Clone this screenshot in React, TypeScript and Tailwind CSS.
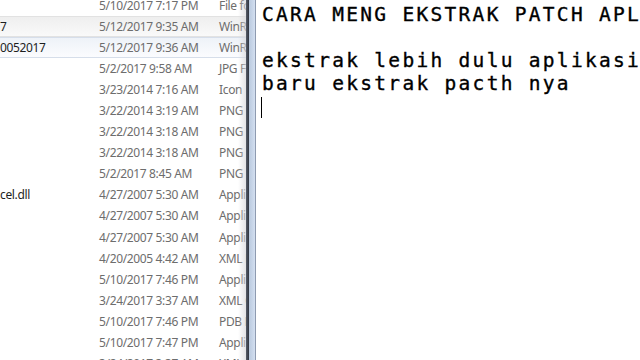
import React from 'react'

type Row = {
  name: string
  date: string
  type: string
  state?: 'hover' | 'selected'
}

const rows: Row[] = [
  { name: '', date: '5/10/2017 7:17 PM', type: 'File folder' },
  { name: '7', date: '5/12/2017 9:35 AM', type: 'WinRAR archive', state: 'hover' },
  { name: '0052017', date: '5/12/2017 9:36 AM', type: 'WinRAR archive', state: 'selected' },
  { name: '', date: '5/2/2017 9:58 AM', type: 'JPG File' },
  { name: '', date: '3/23/2014 7:16 AM', type: 'Icon' },
  { name: '', date: '3/22/2014 3:19 AM', type: 'PNG File' },
  { name: '', date: '3/22/2014 3:18 AM', type: 'PNG File' },
  { name: '', date: '3/22/2014 3:18 AM', type: 'PNG File' },
  { name: '', date: '5/2/2017 8:45 AM', type: 'PNG File' },
  { name: 'cel.dll', date: '4/27/2007 5:30 AM', type: 'Application extension' },
  { name: '', date: '4/27/2007 5:30 AM', type: 'Application extension' },
  { name: '', date: '4/27/2007 5:30 AM', type: 'Application extension' },
  { name: '', date: '4/20/2005 4:42 AM', type: 'XML Document' },
  { name: '', date: '5/10/2017 7:46 PM', type: 'Application' },
  { name: '', date: '3/24/2017 3:37 AM', type: 'XML Configuration' },
  { name: '', date: '5/10/2017 7:46 PM', type: 'PDB File' },
  { name: '', date: '5/10/2017 7:47 PM', type: 'Application' },
  { name: '', date: '3/24/2017 3:37 AM', type: 'XML Configuration' },
]

function FileRow({ row }: { row: Row }) {
  const bg =
    row.state === 'hover'
      ? 'bg-gradient-to-b from-[#efefef] to-[#f9f9f9] border-y border-[#e2e2e2]'
      : row.state === 'selected'
        ? 'bg-gradient-to-b from-[#eef2f8] to-[#fbfcfe] border-y border-[#d6deea]'
        : 'border-y border-transparent'
  return (
    <div className={`flex h-[21.1px] shrink-0 items-center whitespace-nowrap text-[12px] tracking-[-0.35px] ${bg}`}>
      <span className="w-[99px] shrink-0 overflow-hidden text-[#1e1e1e]">{row.name}</span>
      <span className="w-[120px] shrink-0 text-[#6d6d6d]">{row.date}</span>
      <span className="shrink-0 text-[#6d6d6d]">{row.type}</span>
    </div>
  )
}

export default function App() {
  return (
    <div className="flex h-[360px] w-[640px] overflow-hidden bg-white">
      {/* explorer list behind, clipped */}
      <div
        className="relative w-[246px] shrink-0 overflow-hidden bg-white"
        style={{ fontFamily: '"Noto Sans", "Open Sans", sans-serif' }}
      >
        <div className="-mt-[5px] flex flex-col">
          {rows.map((r, i) => (
            <FileRow key={i} row={r} />
          ))}
        </div>
        <div className="absolute inset-y-0 right-0 w-[8px] bg-gradient-to-r from-transparent to-[#d8d8dc]/70" />
      </div>

      {/* notepad window frame */}
      <div className="w-[3px] shrink-0 bg-gradient-to-r from-[#5a5f6a] to-[#2e3440]" />
      <div className="w-[6px] shrink-0 bg-gradient-to-r from-[#b9c9de] to-[#d3dff0]" />
      <div className="w-[1px] shrink-0 bg-[#8e9bb0]" />

      {/* notepad edit area */}
      <div
        className="flex-1 overflow-hidden whitespace-pre pl-[6px] pt-[3px] text-[19.5px] leading-[23px] tracking-[2.3px] text-black [-webkit-text-stroke:0.35px_black]"
        style={{ fontFamily: '"DejaVu Sans Mono", "Liberation Mono", monospace' }}
      >
        <div>CARA MENG EKSTRAK PATCH APLIKASI</div>
        <div>&nbsp;</div>
        <div>ekstrak lebih dulu aplikasi</div>
        <div>baru ekstrak pacth nya</div>
        <div className="flex h-[23px] items-center">
          <span className="-ml-[1px] mt-[2px] h-[21px] w-[1px] bg-black" />
        </div>
      </div>
    </div>
  )
}
